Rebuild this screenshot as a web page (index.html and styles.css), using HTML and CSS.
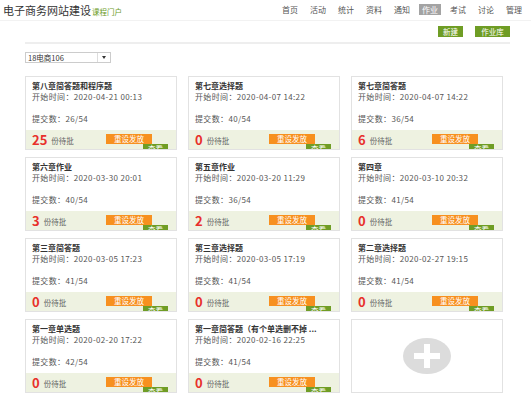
FILE: index.html
```html
<!DOCTYPE html>
<html lang="zh">
<head>
<meta charset="utf-8">
<link rel="stylesheet" href="styles.css">
</head>
<body>
<header class="top">
  <div class="brand"><span class="course">电子商务网站建设</span><a class="portal">课程门户</a></div>
  <nav class="nav">
    <a>首页</a><a>活动</a><a>统计</a><a>资料</a><a>通知</a><a class="on">作业</a><a>考试</a><a>讨论</a><a>管理</a>
  </nav>
</header>
<main class="main">
  <div class="toolbar">
    <a class="gbtn">新建</a>
    <a class="gbtn lib">作业库</a>
  </div>
  <div class="selrow">
    <div class="select"><span>18电商106</span><span class="arrow"></span></div>
  </div>
  <div class="grid">
    <div class="card">
      <div class="body"><div class="title">第八章简答题和程序题</div><div class="line">开始时间：2020-04-21 00:13</div><div class="line sub">提交数：26/54</div></div>
      <div class="foot"><span class="num">25</span><span class="wait">份待批</span><div class="acts"><a class="obtn">重设发放</a><a class="vbtn">查看</a></div></div>
    </div>
    <div class="card">
      <div class="body"><div class="title">第七章选择题</div><div class="line">开始时间：2020-04-07 14:22</div><div class="line sub">提交数：40/54</div></div>
      <div class="foot"><span class="num">0</span><span class="wait">份待批</span><div class="acts"><a class="obtn">重设发放</a><a class="vbtn">查看</a></div></div>
    </div>
    <div class="card">
      <div class="body"><div class="title">第七章简答题</div><div class="line">开始时间：2020-04-07 14:22</div><div class="line sub">提交数：36/54</div></div>
      <div class="foot"><span class="num">6</span><span class="wait">份待批</span><div class="acts"><a class="obtn">重设发放</a><a class="vbtn">查看</a></div></div>
    </div>
    <div class="card">
      <div class="body"><div class="title">第六章作业</div><div class="line">开始时间：2020-03-30 20:01</div><div class="line sub">提交数：40/54</div></div>
      <div class="foot"><span class="num">3</span><span class="wait">份待批</span><div class="acts"><a class="obtn">重设发放</a><a class="vbtn">查看</a></div></div>
    </div>
    <div class="card">
      <div class="body"><div class="title">第五章作业</div><div class="line">开始时间：2020-03-20 11:29</div><div class="line sub">提交数：36/54</div></div>
      <div class="foot"><span class="num">2</span><span class="wait">份待批</span><div class="acts"><a class="obtn">重设发放</a><a class="vbtn">查看</a></div></div>
    </div>
    <div class="card">
      <div class="body"><div class="title">第四章</div><div class="line">开始时间：2020-03-10 20:32</div><div class="line sub">提交数：41/54</div></div>
      <div class="foot"><span class="num">0</span><span class="wait">份待批</span><div class="acts"><a class="obtn">重设发放</a><a class="vbtn">查看</a></div></div>
    </div>
    <div class="card">
      <div class="body"><div class="title">第三章简答题</div><div class="line">开始时间：2020-03-05 17:23</div><div class="line sub">提交数：41/54</div></div>
      <div class="foot"><span class="num">0</span><span class="wait">份待批</span><div class="acts"><a class="obtn">重设发放</a><a class="vbtn">查看</a></div></div>
    </div>
    <div class="card">
      <div class="body"><div class="title">第三章选择题</div><div class="line">开始时间：2020-03-05 17:19</div><div class="line sub">提交数：41/54</div></div>
      <div class="foot"><span class="num">0</span><span class="wait">份待批</span><div class="acts"><a class="obtn">重设发放</a><a class="vbtn">查看</a></div></div>
    </div>
    <div class="card">
      <div class="body"><div class="title">第二章选择题</div><div class="line">开始时间：2020-02-27 19:15</div><div class="line sub">提交数：41/54</div></div>
      <div class="foot"><span class="num">0</span><span class="wait">份待批</span><div class="acts"><a class="obtn">重设发放</a><a class="vbtn">查看</a></div></div>
    </div>
    <div class="card">
      <div class="body"><div class="title">第一章单选题</div><div class="line">开始时间：2020-02-20 17:22</div><div class="line sub">提交数：42/54</div></div>
      <div class="foot"><span class="num">0</span><span class="wait">份待批</span><div class="acts"><a class="obtn">重设发放</a><a class="vbtn">查看</a></div></div>
    </div>
    <div class="card">
      <div class="body"><div class="title">第一章简答题（有个单选删不掉 ...</div><div class="line">开始时间：2020-02-16 22:25</div><div class="line sub">提交数：41/54</div></div>
      <div class="foot"><span class="num">0</span><span class="wait">份待批</span><div class="acts"><a class="obtn">重设发放</a><a class="vbtn">查看</a></div></div>
    </div>
    <div class="card add">
      <svg class="plus" width="48" height="36" viewBox="0 0 48 36"><ellipse cx="24" cy="18" rx="24" ry="18" fill="#dcdcdc"/><rect x="11" y="15" width="26" height="6" fill="#fff"/><rect x="21" y="6" width="6" height="24" fill="#fff"/></svg>
    </div>
  </div>
</main>
</body>
</html>
```
FILE: styles.css
```css
* { box-sizing: border-box; }
html, body { margin: 0; padding: 0; background: #fff; }
body {
  font-family: "Noto Sans CJK SC", "Noto Sans", "Liberation Sans", sans-serif;
  color: #333;
  width: 531px;
  height: 401px;
  overflow: hidden;
}
a { text-decoration: none; cursor: pointer; }

.top {
  height: 21px;
  display: flex;
  align-items: center;
  justify-content: space-between;
  padding: 0 0 0 3px;
  border-bottom: 1px solid #f2f2f2;
}
.brand { display: flex; align-items: baseline; }
.course { font-size: 11px; color: #333; line-height: 14px; }
.portal { font-size: 7.5px; color: #6a9b1e; margin-left: 1px; }
.nav { display: flex; align-items: center; gap: 12px; padding-right: 9px; margin-top: -2px; }
.nav a { font-size: 8px; color: #555; line-height: 11px; }
.nav a.on { background: #a3a3a3; color: #fff; padding: 0 3px; margin: 0 -3px; }

.main { margin: 0 22px 0 25px; }
.toolbar {
  display: flex;
  justify-content: flex-end;
  gap: 12px;
  padding-top: 5px;
  height: 23px;
  border-bottom: 2px solid #eee;
  margin-right: -1px;
}
.gbtn {
  background: #6f9d25;
  color: #fff;
  font-size: 7.5px;
  line-height: 11px;
  height: 11px;
  width: 25px;
  text-align: center;
}
.gbtn.lib { width: 35px; }

.selrow { padding-top: 8px; height: 32px; }
.select {
  width: 86px;
  height: 11px;
  border: 1px solid #ccc;
  display: flex;
  align-items: center;
  justify-content: space-between;
  font-size: 7.5px;
  color: #333;
  padding-left: 2px;
  line-height: 9px;
}
.arrow {
  width: 13px;
  height: 9px;
  border-left: 1px solid #ddd;
  position: relative;
}
.arrow::after {
  content: "";
  position: absolute;
  left: 4px;
  top: 3px;
  border-left: 2.5px solid transparent;
  border-right: 2.5px solid transparent;
  border-top: 3px solid #333;
}

.grid {
  display: grid;
  grid-template-columns: repeat(3, 152px);
  grid-auto-rows: 74px;
  column-gap: 11px;
  row-gap: 7px;
}
.card {
  border: 1px solid #e2e2e2;
  display: flex;
  flex-direction: column;
  overflow: hidden;
  background: #fff;
}
.body { height: 53px; flex-shrink: 0; padding: 3px 6px 0 6px; }
.title { font-size: 8px; font-weight: bold; color: #333; line-height: 11px; white-space: nowrap; overflow: hidden; }
.line { font-size: 8px; color: #555; line-height: 11px; letter-spacing: 0.35px; white-space: nowrap; }
.line.sub { margin-top: 11px; }
.foot {
  height: 19px;
  flex-shrink: 0;
  overflow: hidden;
  background: #eef2e1;
  display: flex;
  align-items: flex-start;
  padding-left: 6px;
}
.num { font-size: 13px; font-weight: bold; color: #e8302b; line-height: 18px; margin-top: 1px; }
.wait { font-size: 7.5px; color: #666; margin-left: 4px; line-height: 18px; margin-top: 2px; }
.acts {
  margin-left: auto;
  margin-right: 8px;
  display: flex;
  flex-direction: column;
  align-items: flex-end;
  padding-top: 4px;
}
.obtn {
  background: #f7901f;
  color: #fff;
  font-size: 7.5px;
  width: 46px;
  height: 10px;
  line-height: 10px;
  text-align: center;
  margin-right: 16px;
  flex-shrink: 0;
}
.vbtn {
  background: #6f9d25;
  color: #fff;
  font-size: 7.5px;
  width: 25px;
  height: 10px;
  line-height: 10px;
  text-align: center;
  flex-shrink: 0;
}
.card.add { align-items: center; justify-content: center; }
```
